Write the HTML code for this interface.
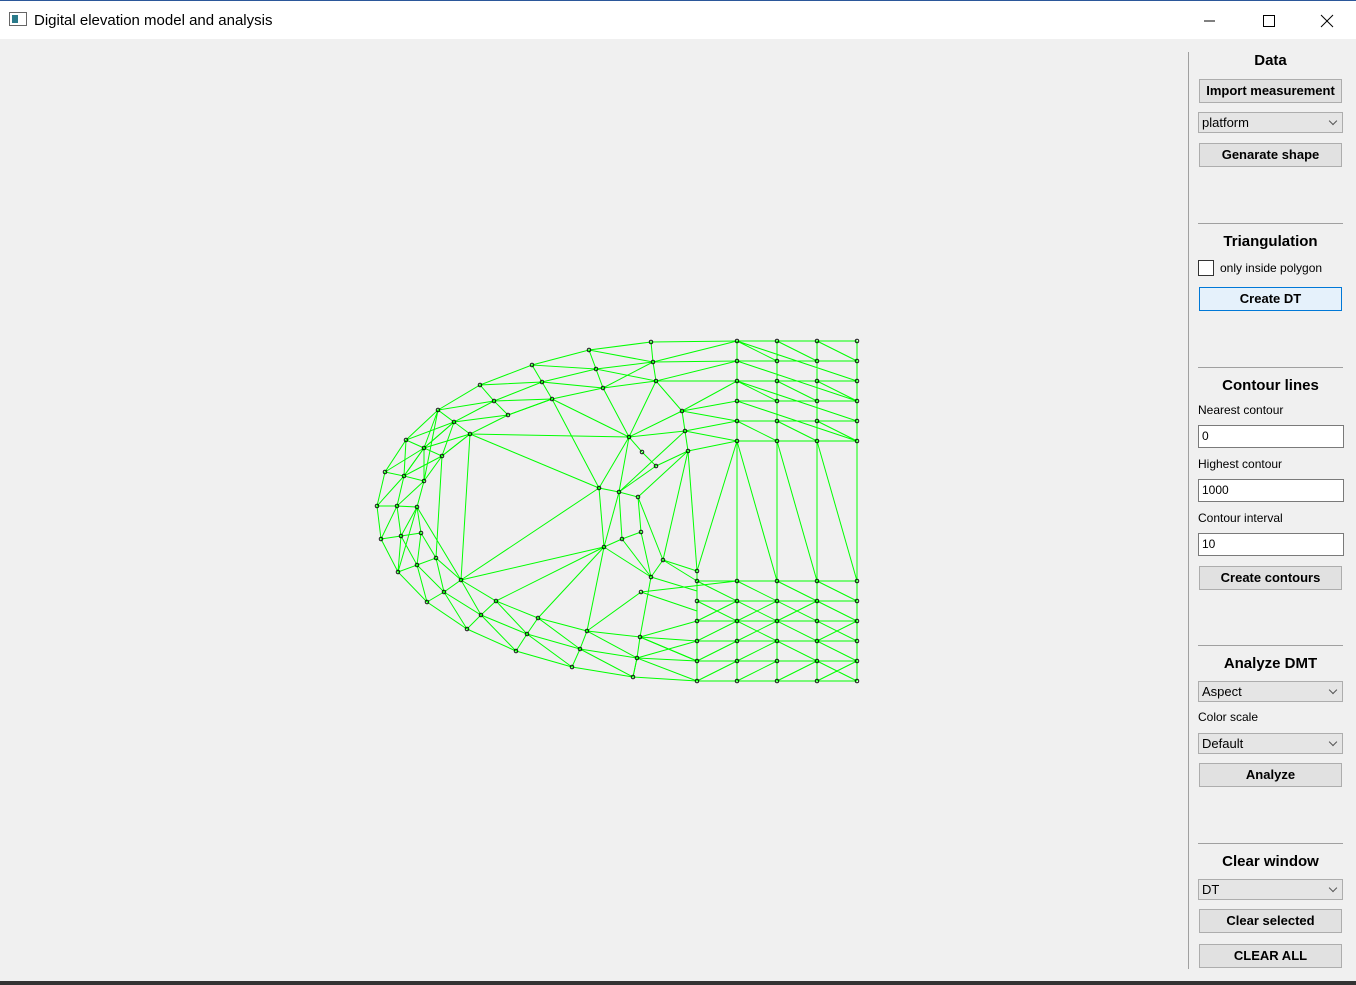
<!DOCTYPE html>
<html><head><meta charset="utf-8"><style>
*{box-sizing:border-box;margin:0;padding:0}
body{width:1356px;height:985px;background:#f0f0f0;font-family:"Liberation Sans",sans-serif;position:relative;overflow:hidden}
.title{position:absolute;left:0;top:0;width:1356px;height:39px;background:#fff;border-top:1px solid #2b579a}
.title span{position:absolute;left:34px;top:11px;font-size:15px;color:#000}
.a{position:absolute}
.h{position:absolute;left:1198px;width:145px;text-align:center;font-weight:bold;font-size:15px;color:#000}
.btn{position:absolute;left:1199px;width:143px;height:24px;border:1px solid #adadad;background:#e1e1e1;font-weight:bold;font-size:13px;text-align:center;line-height:22px;color:#000}
.dd{position:absolute;left:1198px;width:145px;height:21px;border:1px solid #adadad;background:#e5e5e5;font-size:13px;line-height:19px;padding-left:3px}
.dd:after{content:"";position:absolute;right:6px;top:5px;width:5px;height:5px;border-right:1px solid #555;border-bottom:1px solid #555;transform:rotate(45deg)}
.inp{position:absolute;left:1198px;width:146px;height:23px;border:1px solid #7a7a7a;background:#fff;font-size:12px;line-height:21px;padding-left:3px}
.lb{position:absolute;left:1198px;font-size:12px}
.sep{position:absolute;left:1198px;width:145px;height:1px;background:#a0a0a0}
</style></head><body>
<div class="title"><svg class="a" style="left:9px;top:11px" width="18" height="15"><rect x="0.5" y="0.5" width="17" height="13" fill="#fff" stroke="#666"/><rect x="3" y="3" width="6" height="8" fill="#2a7a8a"/></svg><span>Digital elevation model and analysis</span>
<svg class="a" style="left:1200px;top:12px" width="140" height="16" stroke="#000" fill="none"><line x1="4" y1="8" x2="15" y2="8"/><rect x="63.5" y="2.5" width="11" height="11"/><line x1="121" y1="2" x2="133" y2="14"/><line x1="133" y1="2" x2="121" y2="14"/></svg></div>
<div class="a" style="left:1188px;top:52px;width:1px;height:917px;background:#a0a0a0"></div>
<div class="a" style="left:0;top:981px;width:1356px;height:4px;background:#333"></div>

<svg class="a" style="left:0;top:0" width="1180" height="985" fill="none">
<g stroke="#00ff00" stroke-width="1">
<polyline points="651,342 589,350 532,365 480,385 438,410 406,440 385,472 377,506 381,539 398,572 427,602 467,629 516,651 572,667 633,677 697,681"/>
<polyline points="653,362 596,369 542,382 494,401 454,422 424,448 404,476 397,506 401,536 417,565 444,592 481,615 527,634 580,649 637,658 697,661"/>
<polyline points="656,381 603,388 552,399 508,415 470,434 442,456 424,481 417,507 421,533 436,558 461,580 496,601 538,618 587,631 640,637 697,641"/>
<polyline points="651,342 653,362 589,350 596,369 532,365 542,382 480,385 494,401 438,410 454,422 406,440 424,448 385,472 404,476 377,506 397,506 381,539 401,536 398,572 417,565 427,602 444,592 467,629 481,615 516,651 527,634 572,667 580,649 633,677 637,658 697,681"/>
<polyline points="653,362 656,381 596,369 603,388 542,382 552,399 494,401 508,415 454,422 470,434 424,448 442,456 404,476 424,481 397,506 417,507 401,536 421,533 417,565 436,558 444,592 461,580 481,615 496,601 527,634 538,618 580,649 587,631 637,658 640,637 697,661"/>
<polyline points="406,440 404,476 424,448 424,481 438,410 424,448 454,422 442,456 436,558 442,456 470,434 461,580 417,507 398,572"/>
<line x1="470" y1="434" x2="629" y2="437"/><line x1="470" y1="434" x2="599" y2="488"/><line x1="552" y1="399" x2="629" y2="437"/><line x1="552" y1="399" x2="599" y2="488"/><line x1="603" y1="388" x2="629" y2="437"/><line x1="508" y1="415" x2="552" y2="399"/>
<line x1="461" y1="580" x2="599" y2="488"/><line x1="461" y1="580" x2="604" y2="547"/><line x1="496" y1="601" x2="604" y2="547"/><line x1="538" y1="618" x2="604" y2="547"/><line x1="587" y1="631" x2="604" y2="547"/><line x1="587" y1="631" x2="641" y2="592"/><line x1="640" y1="637" x2="651" y2="577"/>
<polyline points="629,437 599,488 619,492 629,437 656,381 737,361"/><line x1="629" y1="437" x2="682" y2="411"/><line x1="629" y1="437" x2="685" y2="431"/><line x1="629" y1="437" x2="642" y2="452"/>
<line x1="599" y1="488" x2="604" y2="547"/><line x1="619" y1="492" x2="604" y2="547"/><line x1="619" y1="492" x2="622" y2="539"/><line x1="619" y1="492" x2="638" y2="497"/><line x1="619" y1="492" x2="685" y2="431"/><line x1="619" y1="492" x2="656" y2="466"/><line x1="638" y1="497" x2="688" y2="451"/><line x1="638" y1="497" x2="641" y2="532"/><line x1="638" y1="497" x2="663" y2="560"/><line x1="622" y1="539" x2="641" y2="532"/><line x1="604" y1="547" x2="651" y2="577"/><line x1="604" y1="547" x2="622" y2="539"/><line x1="622" y1="539" x2="651" y2="577"/><line x1="641" y1="532" x2="651" y2="577"/><line x1="663" y1="560" x2="651" y2="577"/><line x1="663" y1="560" x2="688" y2="451"/><line x1="663" y1="560" x2="697" y2="571"/><line x1="663" y1="560" x2="697" y2="581"/><line x1="697" y1="571" x2="688" y2="451"/><line x1="697" y1="571" x2="737" y2="441"/><line x1="651" y1="577" x2="697" y2="591"/><line x1="641" y1="592" x2="737" y2="581"/><line x1="641" y1="592" x2="697" y2="611"/>
<line x1="682" y1="411" x2="685" y2="431"/><line x1="685" y1="431" x2="688" y2="451"/><line x1="682" y1="411" x2="656" y2="381"/><line x1="682" y1="411" x2="737" y2="381"/><line x1="682" y1="411" x2="737" y2="401"/><line x1="682" y1="411" x2="737" y2="421"/><line x1="685" y1="431" x2="737" y2="421"/><line x1="685" y1="431" x2="737" y2="441"/><line x1="688" y1="451" x2="737" y2="441"/><line x1="688" y1="451" x2="656" y2="466"/><line x1="656" y1="466" x2="642" y2="452"/>
<line x1="651" y1="342" x2="737" y2="341"/><line x1="653" y1="362" x2="737" y2="341"/><line x1="653" y1="362" x2="737" y2="361"/><line x1="656" y1="381" x2="737" y2="381"/><line x1="603" y1="388" x2="653" y2="362"/>
<line x1="737" y1="441" x2="777" y2="581"/><line x1="777" y1="441" x2="817" y2="581"/><line x1="817" y1="441" x2="857" y2="581"/>
<line x1="640" y1="637" x2="697" y2="621"/><line x1="640" y1="637" x2="697" y2="661"/><line x1="637" y1="658" x2="697" y2="641"/><line x1="633" y1="677" x2="637" y2="658"/>
</g>
<g stroke="#00ff00" id="grid"></g>
</svg>
<svg class="a" style="left:0;top:0" width="1180" height="985" fill="none" stroke="#00ff00">
<path d="M737 341V681M777 341V681M817 341V681M857 341V681M697 571V681
M737 341H857M737 361H857M737 381H857M737 401H857M737 421H857M737 441H857
M697 581H857M697 601H857M697 621H857M697 641H857M697 661H857M697 681H857
M737 341L857 381M737 361L857 401M737 381L857 421M737 401L857 441M737 421L777 441M777 421L817 441M817 421L857 441
M737 341L777 361M777 341L817 361M817 341L857 361M737 381L777 401M777 381L817 401M817 381L857 401
M697 581L857 661M697 601L857 681M737 581L857 641M777 581L857 621M817 581L857 601
M697 621L737 601M697 641L737 621M697 661L737 641M697 681L737 661
M737 621L777 601M737 641L777 621M737 661L777 641M737 681L777 661
M777 621L817 601M777 681L817 661M817 681L857 661M817 641L857 621"/>
</svg>
<svg class="a" style="left:0;top:0" width="1180" height="985" fill="none" stroke="#000" stroke-width="0.9">
<g id="pts"></g>
</svg>
<svg class="a" style="left:0;top:0" width="1180" height="985" fill="none" stroke="#000" stroke-width="0.9">
<circle cx="651" cy="342" r="1.8"/><circle cx="589" cy="350" r="1.8"/><circle cx="532" cy="365" r="1.8"/><circle cx="480" cy="385" r="1.8"/><circle cx="438" cy="410" r="1.8"/><circle cx="406" cy="440" r="1.8"/><circle cx="385" cy="472" r="1.8"/><circle cx="377" cy="506" r="1.8"/><circle cx="381" cy="539" r="1.8"/><circle cx="398" cy="572" r="1.8"/><circle cx="427" cy="602" r="1.8"/><circle cx="467" cy="629" r="1.8"/><circle cx="516" cy="651" r="1.8"/><circle cx="572" cy="667" r="1.8"/><circle cx="633" cy="677" r="1.8"/>
<circle cx="653" cy="362" r="1.8"/><circle cx="596" cy="369" r="1.8"/><circle cx="542" cy="382" r="1.8"/><circle cx="494" cy="401" r="1.8"/><circle cx="454" cy="422" r="1.8"/><circle cx="424" cy="448" r="1.8"/><circle cx="404" cy="476" r="1.8"/><circle cx="397" cy="506" r="1.8"/><circle cx="401" cy="536" r="1.8"/><circle cx="417" cy="565" r="1.8"/><circle cx="444" cy="592" r="1.8"/><circle cx="481" cy="615" r="1.8"/><circle cx="527" cy="634" r="1.8"/><circle cx="580" cy="649" r="1.8"/><circle cx="637" cy="658" r="1.8"/>
<circle cx="656" cy="381" r="1.8"/><circle cx="603" cy="388" r="1.8"/><circle cx="552" cy="399" r="1.8"/><circle cx="508" cy="415" r="1.8"/><circle cx="470" cy="434" r="1.8"/><circle cx="442" cy="456" r="1.8"/><circle cx="424" cy="481" r="1.8"/><circle cx="417" cy="507" r="1.8"/><circle cx="421" cy="533" r="1.8"/><circle cx="436" cy="558" r="1.8"/><circle cx="461" cy="580" r="1.8"/><circle cx="496" cy="601" r="1.8"/><circle cx="538" cy="618" r="1.8"/><circle cx="587" cy="631" r="1.8"/><circle cx="640" cy="637" r="1.8"/>
<circle cx="629" cy="437" r="1.8"/><circle cx="599" cy="488" r="1.8"/><circle cx="619" cy="492" r="1.8"/><circle cx="604" cy="547" r="1.8"/><circle cx="682" cy="411" r="1.8"/><circle cx="685" cy="431" r="1.8"/><circle cx="642" cy="452" r="1.8"/><circle cx="688" cy="451" r="1.8"/><circle cx="656" cy="466" r="1.8"/><circle cx="638" cy="497" r="1.8"/><circle cx="641" cy="532" r="1.8"/><circle cx="622" cy="539" r="1.8"/><circle cx="663" cy="560" r="1.8"/><circle cx="651" cy="577" r="1.8"/><circle cx="697" cy="571" r="1.8"/><circle cx="641" cy="592" r="1.8"/>
<g>
<circle cx="737" cy="341" r="1.8"/><circle cx="777" cy="341" r="1.8"/><circle cx="817" cy="341" r="1.8"/><circle cx="857" cy="341" r="1.8"/>
<circle cx="737" cy="361" r="1.8"/><circle cx="777" cy="361" r="1.8"/><circle cx="817" cy="361" r="1.8"/><circle cx="857" cy="361" r="1.8"/>
<circle cx="737" cy="381" r="1.8"/><circle cx="777" cy="381" r="1.8"/><circle cx="817" cy="381" r="1.8"/><circle cx="857" cy="381" r="1.8"/>
<circle cx="737" cy="401" r="1.8"/><circle cx="777" cy="401" r="1.8"/><circle cx="817" cy="401" r="1.8"/><circle cx="857" cy="401" r="1.8"/>
<circle cx="737" cy="421" r="1.8"/><circle cx="777" cy="421" r="1.8"/><circle cx="817" cy="421" r="1.8"/><circle cx="857" cy="421" r="1.8"/>
<circle cx="737" cy="441" r="1.8"/><circle cx="777" cy="441" r="1.8"/><circle cx="817" cy="441" r="1.8"/><circle cx="857" cy="441" r="1.8"/>
<circle cx="697" cy="581" r="1.8"/><circle cx="737" cy="581" r="1.8"/><circle cx="777" cy="581" r="1.8"/><circle cx="817" cy="581" r="1.8"/><circle cx="857" cy="581" r="1.8"/>
<circle cx="697" cy="601" r="1.8"/><circle cx="737" cy="601" r="1.8"/><circle cx="777" cy="601" r="1.8"/><circle cx="817" cy="601" r="1.8"/><circle cx="857" cy="601" r="1.8"/>
<circle cx="697" cy="621" r="1.8"/><circle cx="737" cy="621" r="1.8"/><circle cx="777" cy="621" r="1.8"/><circle cx="817" cy="621" r="1.8"/><circle cx="857" cy="621" r="1.8"/>
<circle cx="697" cy="641" r="1.8"/><circle cx="737" cy="641" r="1.8"/><circle cx="777" cy="641" r="1.8"/><circle cx="817" cy="641" r="1.8"/><circle cx="857" cy="641" r="1.8"/>
<circle cx="697" cy="661" r="1.8"/><circle cx="737" cy="661" r="1.8"/><circle cx="777" cy="661" r="1.8"/><circle cx="817" cy="661" r="1.8"/><circle cx="857" cy="661" r="1.8"/>
<circle cx="697" cy="681" r="1.8"/><circle cx="737" cy="681" r="1.8"/><circle cx="777" cy="681" r="1.8"/><circle cx="817" cy="681" r="1.8"/><circle cx="857" cy="681" r="1.8"/>
</g></svg>

<div class="h" style="top:52px">Data</div>
<div class="btn" style="top:79px">Import measurement</div>
<div class="dd" style="top:112px">platform</div>
<div class="btn" style="top:143px">Genarate shape</div>
<div class="sep" style="top:223px"></div>
<div class="h" style="top:233px">Triangulation</div>
<div class="a" style="left:1198px;top:260px;width:16px;height:16px;border:1px solid #333;background:#fff"></div>
<div class="lb" style="left:1220px;top:261px">only inside polygon</div>
<div class="btn" style="top:287px;background:#e5f1fb;border-color:#0078d7">Create DT</div>
<div class="sep" style="top:367px"></div>
<div class="h" style="top:377px">Contour lines</div>
<div class="lb" style="top:403px">Nearest contour</div>
<div class="inp" style="top:425px">0</div>
<div class="lb" style="top:457px">Highest contour</div>
<div class="inp" style="top:479px">1000</div>
<div class="lb" style="top:511px">Contour interval</div>
<div class="inp" style="top:533px">10</div>
<div class="btn" style="top:566px">Create contours</div>
<div class="sep" style="top:645px"></div>
<div class="h" style="top:655px">Analyze DMT</div>
<div class="dd" style="top:681px">Aspect</div>
<div class="lb" style="top:710px">Color scale</div>
<div class="dd" style="top:733px">Default</div>
<div class="btn" style="top:763px">Analyze</div>
<div class="sep" style="top:843px"></div>
<div class="h" style="top:853px">Clear window</div>
<div class="dd" style="top:879px">DT</div>
<div class="btn" style="top:909px">Clear selected</div>
<div class="btn" style="top:944px">CLEAR ALL</div>
</body></html>
